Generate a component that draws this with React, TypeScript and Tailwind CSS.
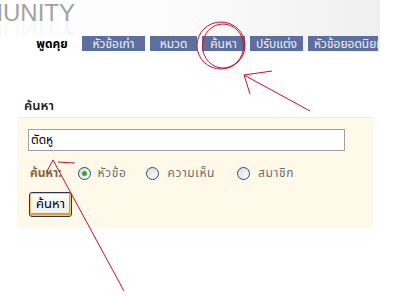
import React from 'react';

const tabs = [
  { label: 'หัวข้อเก่า', w: 'w-[63px]' },
  { label: 'หมวด', w: 'w-[47px]' },
  { label: 'ค้นหา', w: 'w-[43px]' },
  { label: 'ปรับแต่ง', w: 'w-[53px]' },
];

function Radio({ checked }: { checked?: boolean }) {
  return (
    <span className="w-[13px] h-[13px] rounded-full border border-[#1c5180] bg-gradient-to-br from-[#dcdcd6] to-white flex items-center justify-center">
      {checked && <span className="w-[5px] h-[5px] rounded-full bg-[#3fa13b]" />}
    </span>
  );
}

export default function App() {
  const font = { fontFamily: 'Tahoma, "Noto Sans Thai", "Noto Sans", "DejaVu Sans", sans-serif' };
  const titleFont = { fontFamily: 'Arial, "Liberation Sans", sans-serif' };
  return (
    <div className="relative w-[407px] h-[296px] bg-white overflow-hidden" style={font}>
      {/* Header band */}
      <div className="h-[52px] w-[380px] bg-gradient-to-r from-white via-[#fbfbfb] to-[#efefef]">
        <div className="h-[35px] overflow-hidden relative">
          <div className="absolute -left-[73px] -top-[1px] text-[24px] leading-[28px] text-[#a2a2a2]" style={titleFont}>
            COMMUNITY
          </div>
          <div className="absolute -left-[73px] top-[15px] text-[24px] leading-[28px] text-[#a2a2a2] opacity-[0.07] -scale-y-100" style={titleFont} aria-hidden>
            COMMUNITY
          </div>
        </div>
        <div className="flex h-[15px] mt-[1px] pl-[27px] gap-[5px]">
          <div className="w-[50px] bg-white flex items-center justify-center text-[12px] font-bold text-black leading-none">
            พูดคุย
          </div>
          {tabs.map((t) => (
            <div
              key={t.label}
              className={`${t.w} shrink-0 bg-[#5d6f9f] flex items-center justify-center text-[12px] text-[#eef1f8] leading-none whitespace-nowrap`}
            >
              {t.label}
            </div>
          ))}
          <div className="w-[70px] shrink-0 bg-[#5d6f9f] flex items-center pl-[6px] text-[12px] text-[#eef1f8] leading-none whitespace-nowrap overflow-hidden">
            หัวข้อยอดนิยม
          </div>
        </div>
      </div>

      {/* Search section */}
      <div className="pt-[46px] pl-[24px] text-[13px] leading-[16px] font-semibold text-[#222]">ค้นหา</div>
      <div className="mt-[3px] ml-[17px] w-[356px] h-[111px] bg-[#fff9ea] border-t border-[#f6ecd2] pt-[11px] pl-[11px]">
        <div className="w-[317px] h-[22px] border border-[#a0a0a0] bg-white flex items-center px-[2px] text-[12px] text-black">
          ตัดหู
        </div>
        <div className="flex items-center mt-[15px] h-[14px] text-[12px] tracking-[0.6px] text-[#6e6e6e]">
          <span className="ml-[2px] font-bold tracking-normal text-[#7d6a3c]">ค้นหา:</span>
          <span className="ml-[16px]"><Radio checked /></span>
          <span className="ml-[7px]">หัวข้อ</span>
          <span className="ml-[20px]"><Radio /></span>
          <span className="ml-[8px]">ความเห็น</span>
          <span className="ml-[22px]"><Radio /></span>
          <span className="ml-[8px]">สมาชิก</span>
        </div>
        <button className="mt-[12px] ml-[1px] w-[43px] h-[25px] rounded-[3px] border border-[#2a3550] bg-gradient-to-b from-white to-[#ecebe4] shadow-[inset_0_0_0_1px_#f5c76a,inset_-1px_-2px_0_1px_#e59a2a] text-[13px] text-black leading-none">
          ค้นหา
        </button>
      </div>

      {/* Red annotation marks */}
      <svg className="absolute inset-0 pointer-events-none" width="407" height="296" viewBox="0 0 407 296">
        <g stroke="#c8102e" strokeWidth="1" fill="none">
          <ellipse cx="221" cy="45.5" rx="24" ry="23.5" />
          <ellipse cx="223" cy="46" rx="20.5" ry="22" />
          <line x1="310" y1="111" x2="244" y2="75" />
          <line x1="244" y1="75" x2="272" y2="71" />
          <line x1="244" y1="75" x2="250" y2="94" />
          <line x1="124" y1="291" x2="53" y2="160" />
          <line x1="53" y1="160" x2="46" y2="173" />
          <line x1="58" y1="162" x2="75" y2="163" />
        </g>
      </svg>
    </div>
  );
}
